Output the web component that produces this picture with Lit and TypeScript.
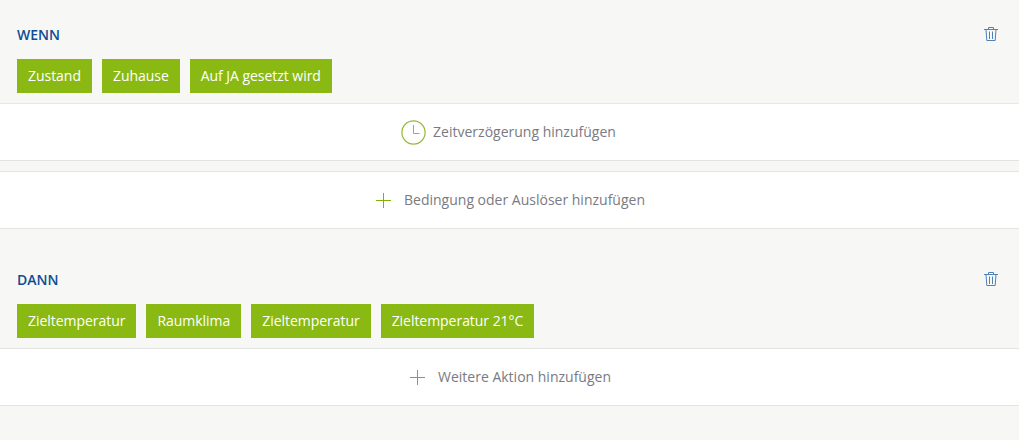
import { LitElement, html, css } from 'lit';
import { customElement } from 'lit/decorators.js';

const trash = html`<svg class="trash" width="16" height="16" viewBox="0 0 16 16" fill="none" stroke="#4f82b8" stroke-width="1">
  <path d="M1 3.5h14M5.5 3.5V1.5h5v2M3 3.5l.8 11h8.4l.8-11M6.5 5.5v7.5M9.5 5.5v7.5" />
</svg>`;

const plus = html`<svg class="plus" width="15" height="15" viewBox="0 0 15 15" stroke="#86b000" stroke-width="1" shape-rendering="crispEdges">
  <path d="M7.5 0v15M0 7.5h15" />
</svg>`;

const clock = html`<svg width="25" height="25" viewBox="0 0 25 25" fill="none" stroke="#94b83a" stroke-width="1.2">
  <circle cx="12.5" cy="12.5" r="11.6" />
  <path d="M12.5 5v8.5h6" stroke-width="1" />
</svg>`;

@customElement('app-root')
export class AppRoot extends LitElement {
  static styles = css`
    :host {
      display: block;
      height: 440px;
      background: #f7f7f5;
      font-family: 'Open Sans', sans-serif;
      font-size: 14px;
      overflow: hidden;
    }

    .section {
      padding-top: 24px;
    }

    .section + .section {
      padding-top: 40px;
    }

    .head {
      display: flex;
      justify-content: space-between;
      align-items: center;
      height: 20px;
      padding: 0 20px 0 17px;
      color: #0f4c92;
      font-weight: 600;
    }

    .trash {
      display: block;
    }

    .chips {
      display: flex;
      gap: 10px;
      padding: 15px 17px 10px;
    }

    .chip {
      height: 34px;
      line-height: 34px;
      padding: 0 11px;
      background: #8ab914;
      color: #fff;
      letter-spacing: -0.04px;
    }

    .row {
      display: flex;
      justify-content: center;
      align-items: center;
      height: 56px;
      padding-left: 2px;
      background: #fff;
      border-top: 1px solid #e3e3e1;
      border-bottom: 1px solid #e3e3e1;
      color: #7a7a82;
      gap: 13px;
    }

    .row span {
      margin-bottom: 2px;
    }

    .row.time {
      gap: 7px;
      padding-left: 0;
      padding-right: 2px;
      border-top-color: #e8e8e6;
    }

    .row + .row {
      margin-top: 10px;
    }
  `;

  render() {
    return html`
      <div class="section">
        <div class="head"><span>WENN</span>${trash}</div>
        <div class="chips">
          <span class="chip">Zustand</span>
          <span class="chip">Zuhause</span>
          <span class="chip">Auf JA gesetzt wird</span>
        </div>
        <div class="row time">${clock}<span>Zeitverzögerung hinzufügen</span></div>
        <div class="row">${plus}<span>Bedingung oder Auslöser hinzufügen</span></div>
      </div>
      <div class="section">
        <div class="head"><span>DANN</span>${trash}</div>
        <div class="chips">
          <span class="chip">Zieltemperatur</span>
          <span class="chip">Raumklima</span>
          <span class="chip">Zieltemperatur</span>
          <span class="chip">Zieltemperatur 21°C</span>
        </div>
        <div class="row">${plus}<span>Weitere Aktion hinzufügen</span></div>
      </div>
    `;
  }
}
